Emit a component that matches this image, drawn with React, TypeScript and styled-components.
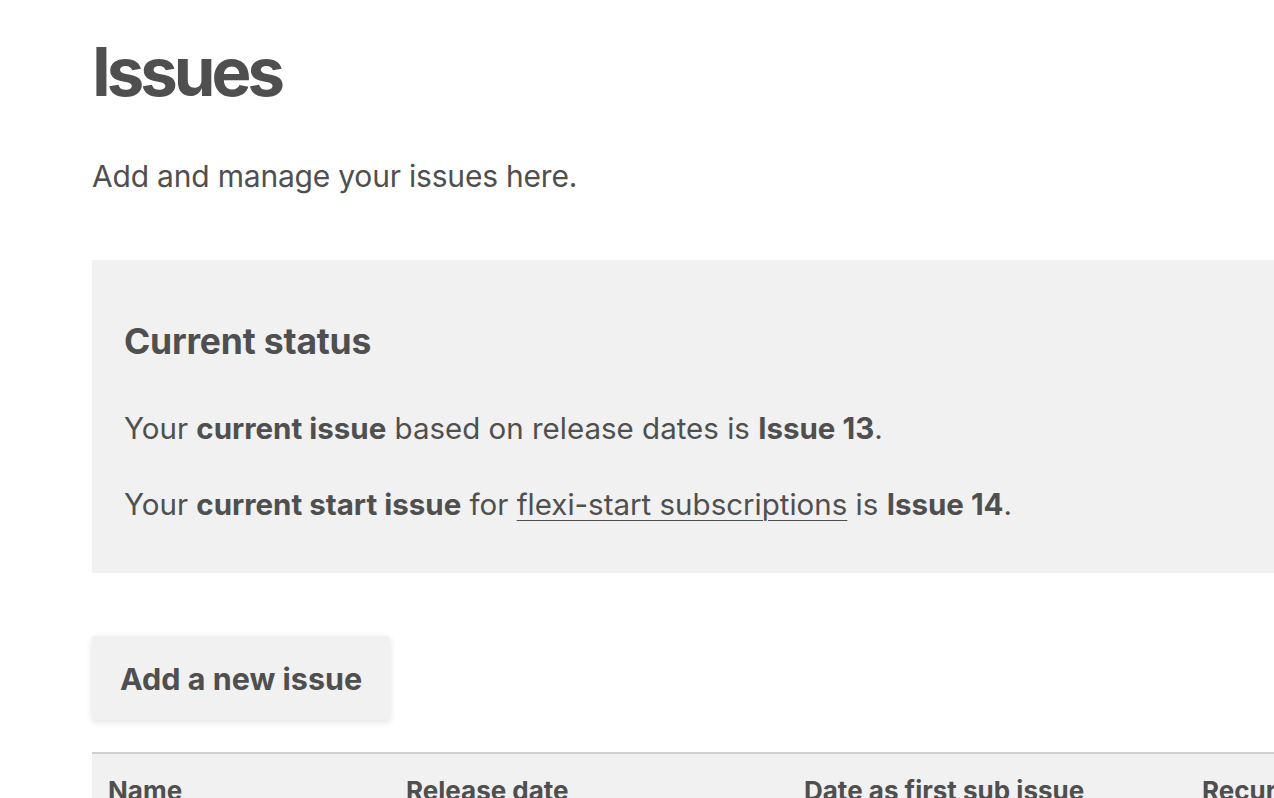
import styled, { createGlobalStyle } from "styled-components";

const GlobalStyle = createGlobalStyle`
  html, body {
    margin: 0;
    padding: 0;
    background: #ffffff;
    overflow-x: hidden;
  }
  body {
    font-family: Inter, "Noto Sans", sans-serif;
    color: #4f4f4f;
  }
`;

const Page = styled.main`
  padding: 28px 0 0 92px;
  width: 1500px;
`;

const Title = styled.h1`
  margin: 0;
  font-size: 67px;
  font-weight: 700;
  line-height: 88px;
  letter-spacing: -4px;
`;

const Lead = styled.p`
  margin: 38px 0 0;
  font-size: 30px;
  font-weight: 400;
  line-height: 44px;
  letter-spacing: -0.2px;
`;

const StatusPanel = styled.section`
  margin-top: 62px;
  background: #f1f1f1;
  padding: 60px 32px 47px;
`;

const PanelTitle = styled.h2`
  margin: 0 0 42px;
  font-size: 35.5px;
  font-weight: 700;
  line-height: 44px;
  letter-spacing: -0.2px;
`;

const StatusLine = styled.p`
  margin: 0;
  font-size: 29.5px;
  line-height: 44px;
  & + & {
    margin-top: 32px;
  }
  b {
    font-weight: 700;
  }
  a {
    color: inherit;
    text-decoration: underline;
    text-underline-offset: 5px;
    text-decoration-thickness: 1px;
  }
`;

const AddButton = styled.button`
  display: block;
  margin-top: 63px;
  height: 84px;
  padding: 0 28px;
  background: #f1f1f1;
  border: none;
  border-radius: 3px;
  box-shadow: 0 2px 6px rgba(0, 0, 0, 0.12);
  font-family: inherit;
  font-size: 30.5px;
  font-weight: 700;
  color: #4f4f4f;
`;

const Table = styled.div`
  margin-top: 32px;
  border-top: 2px solid #cfcfcf;
`;

const HeadRow = styled.div`
  display: grid;
  grid-template-columns: 298px 398px 398px 398px;
  background: #f1f1f1;
`;

const HeadCell = styled.div`
  padding: 20px 16px 20px;
  font-size: 26px;
  font-weight: 700;
  line-height: 34px;
  white-space: nowrap;
`;

export default function App() {
  return (
    <>
      <GlobalStyle />
      <Page>
        <Title>Issues</Title>
        <Lead>Add and manage your issues here.</Lead>
        <StatusPanel>
          <PanelTitle>Current status</PanelTitle>
          <StatusLine>
            Your <b>current issue</b> based on release dates is <b>Issue 13</b>.
          </StatusLine>
          <StatusLine>
            Your <b>current start issue</b> for{" "}
            <a href="#flexi">flexi-start subscriptions</a> is <b>Issue 14</b>.
          </StatusLine>
        </StatusPanel>
        <AddButton>Add a new issue</AddButton>
        <Table>
          <HeadRow>
            <HeadCell>Name</HeadCell>
            <HeadCell>Release date</HeadCell>
            <HeadCell>Date as first sub issue</HeadCell>
            <HeadCell>Recurring</HeadCell>
          </HeadRow>
        </Table>
      </Page>
    </>
  );
}
